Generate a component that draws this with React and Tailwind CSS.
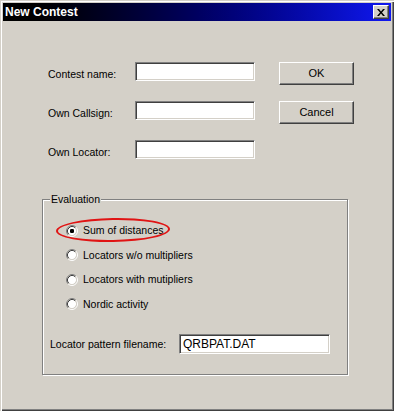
import React from 'react';

const font = { fontFamily: '"Liberation Sans", Arial, sans-serif' };

const Field = ({ value = '', width = 'w-[120px]', height = 'h-[19px]' }) => (
  <div
    className={`${width} ${height} bg-white border border-t-[#808080] border-l-[#808080] border-b-white border-r-white shadow-[inset_1px_1px_0_#404040,inset_-1px_-1px_0_#d4d0c8] flex items-center pl-[3px] text-[12px] text-black`}
  >
    {value}
  </div>
);

const Button = ({ children }) => (
  <button className="w-[75px] h-[23px] bg-[#d4d0c8] border border-t-white border-l-white border-b-[#404040] border-r-[#404040] shadow-[inset_-1px_-1px_0_#808080] text-[11px] text-black flex items-center justify-center">
    {children}
  </button>
);

const Radio = ({ checked }) => (
  <svg width="12" height="12" viewBox="0 0 12 12" className="shrink-0">
    <circle cx="6" cy="6" r="4.2" fill="white" />
    <path d="M2.11 9.89 A5.5 5.5 0 0 1 9.89 2.11" fill="none" stroke="#808080" />
    <path d="M9.89 2.11 A5.5 5.5 0 0 1 2.11 9.89" fill="none" stroke="#ffffff" />
    <path d="M2.82 9.18 A4.5 4.5 0 0 1 9.18 2.82" fill="none" stroke="#404040" />
    <path d="M9.18 2.82 A4.5 4.5 0 0 1 2.82 9.18" fill="none" stroke="#d4d0c8" />
    {checked && <rect x="4" y="4" width="4" height="4" rx="1.2" fill="black" />}
  </svg>
);

const RadioRow = ({ label, checked, children }) => (
  <div className="relative flex items-center h-[13px]">
    <Radio checked={checked} />
    <span className="ml-[5px] text-[10.5px] text-black leading-none">{label}</span>
    {children}
  </div>
);

export default function App() {
  return (
    <div className="w-[395px] h-[413px] bg-white" style={font}>
      <div className="w-[394px] h-[411px] bg-[#d4d0c8] p-[3px] shadow-[inset_1px_1px_0_#d4d0c8,inset_2px_2px_0_#ffffff,inset_-1px_-1px_0_#404040,inset_-2px_-2px_0_#808080] flex flex-col">
        <div className="h-[18px] bg-linear-to-r from-black via-[#000060] to-[#1018f0] flex items-center justify-between pl-[2px] pr-[2px]">
          <span className="text-white font-bold text-[12px] leading-none">New Contest</span>
          <div className="w-[16px] h-[14px] bg-[#d4d0c8] border border-t-white border-l-white border-b-[#404040] border-r-[#404040] shadow-[inset_-1px_-1px_0_#808080] flex items-center justify-center">
            <svg width="8" height="7" viewBox="0 0 8 7">
              <path d="M0 0h2l2 2.5L6 0h2L5 3.5 8 7H6L4 4.5 2 7H0l3-3.5z" fill="black" />
            </svg>
          </div>
        </div>

        <div className="pt-[41px] pl-[45px] flex">
          <div className="flex flex-col">
            {['Contest name:', 'Own Callsign:', 'Own Locator:'].map((l, i) => (
              <div key={l} className={`flex items-center h-[19px] ${i > 0 ? 'mt-[20px]' : ''}`}>
                <span className="w-[87px] text-[10.5px] text-black pt-[4px] leading-[12px]">{l}</span>
                <Field />
              </div>
            ))}
          </div>
          <div className="ml-[24px] flex flex-col">
            <Button>OK</Button>
            <div className="mt-[16px]">
              <Button>Cancel</Button>
            </div>
          </div>
        </div>

        <fieldset className="ml-[39px] mt-[34px] w-[306px] border border-[#808080] shadow-[inset_1px_1px_0_white,1px_1px_0_white]">
          <legend className="ml-[7px] px-[1px] text-[10.5px] text-black leading-[13px] bg-[#d4d0c8]">Evaluation</legend>
          <div className="pt-[18px] pl-[23px] flex flex-col gap-[11.5px]">
            <RadioRow label="Sum of distances" checked>
              <div className="absolute left-[-10px] top-[-6px] w-[114px] h-[24px] rounded-[50%] border-2 border-[#e01414] -rotate-1" />
            </RadioRow>
            <RadioRow label="Locators w/o multipliers" />
            <RadioRow label="Locators with mutipliers" />
            <RadioRow label="Nordic activity" />
          </div>
          <div className="mt-[23px] pl-[7px] pb-[20px] flex items-center">
            <span className="w-[129px] text-[10.5px] text-black pt-[3px]">Locator pattern filename:</span>
            <Field value="QRBPAT.DAT" width="w-[151px]" height="h-[20px]" />
          </div>
        </fieldset>
      </div>
    </div>
  );
}
